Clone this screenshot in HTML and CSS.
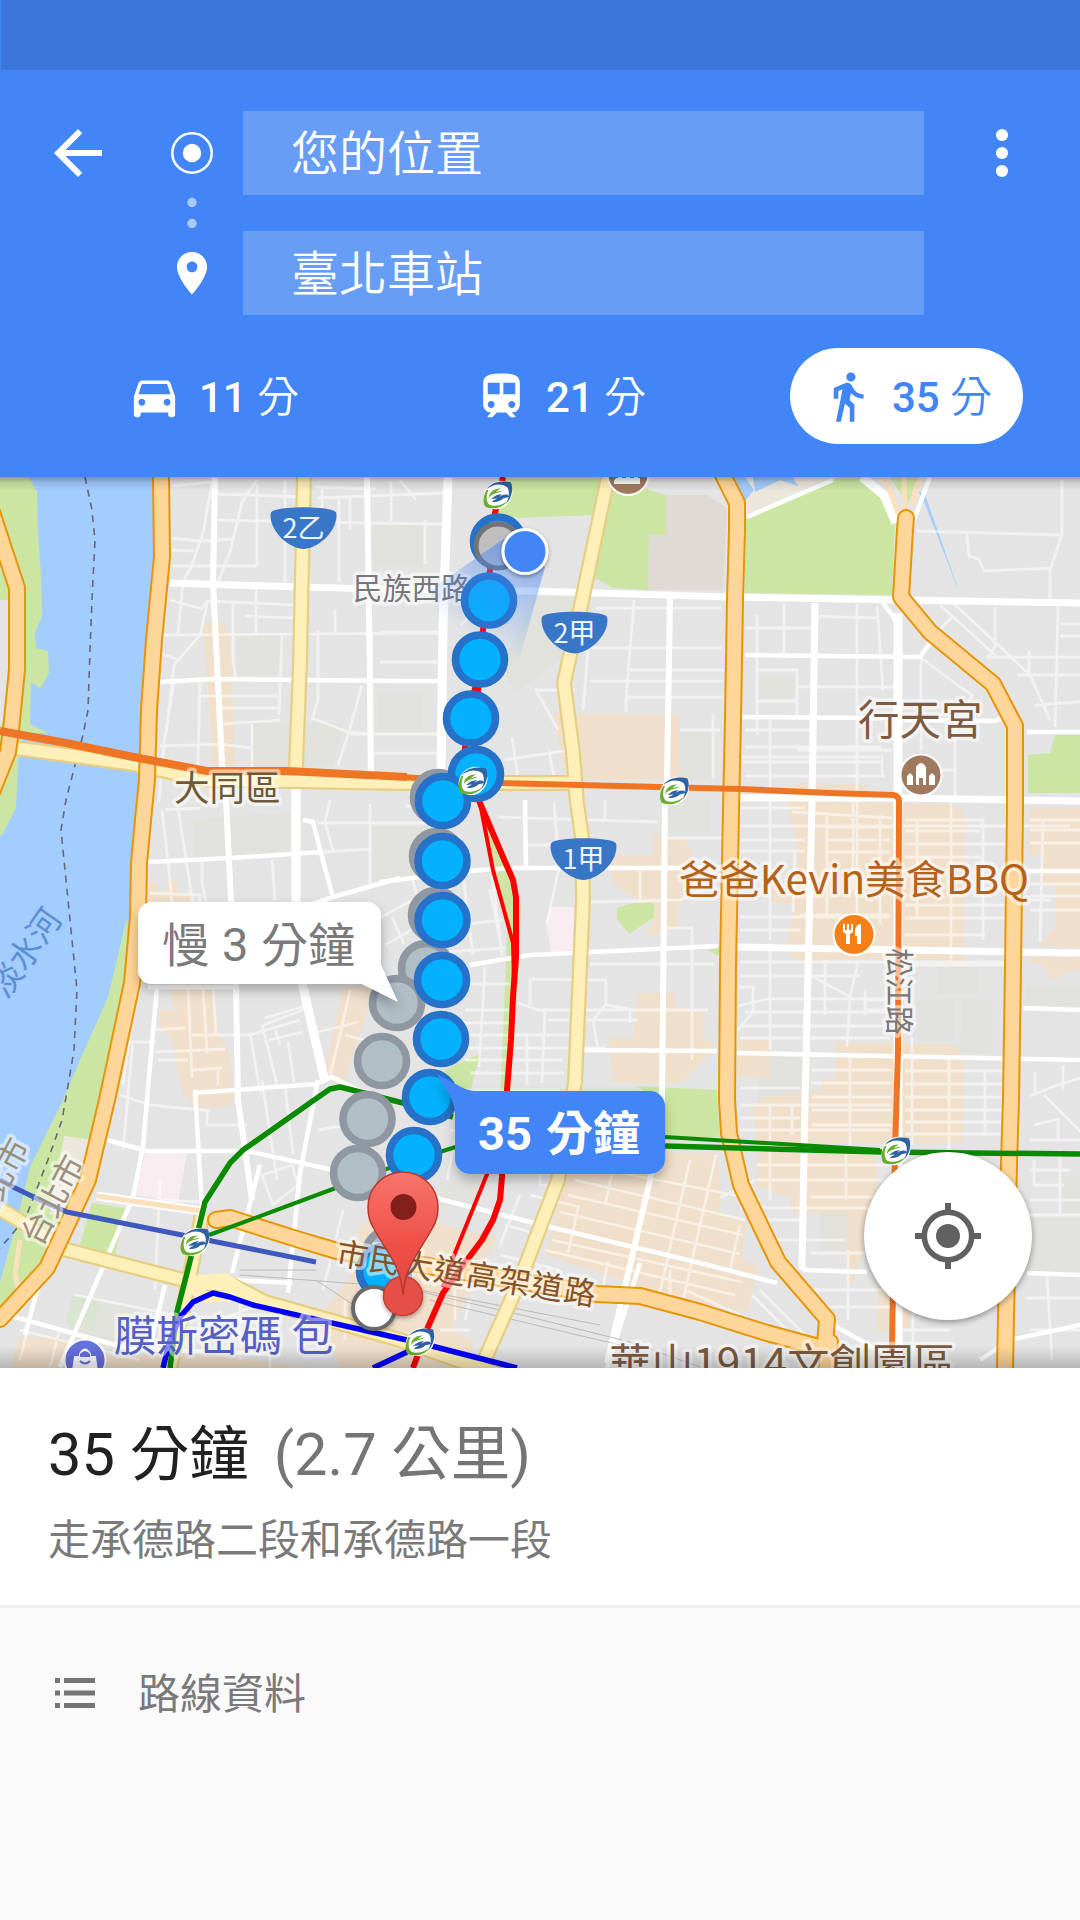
FILE: index.html
```html
<!DOCTYPE html>
<html lang="zh-Hant">
<head>
<meta charset="utf-8">
<title>路線規劃</title>
<link rel="stylesheet" href="styles.css">
</head>
<body>
<header class="header">
  <div class="status-bar"></div>
  <div class="search">
    <svg class="back" viewBox="0 0 24 24"><path d="M20 11H7.83l5.59-5.59L12 4l-8 8 8 8 1.41-1.41L7.83 13H20v-2z"/></svg>
    <svg class="markers" viewBox="0 0 70 204">
      <circle cx="35" cy="42" r="19.700" class="ring"/>
      <circle cx="35" cy="42" r="9.200"/>
      <circle cx="35" cy="91.500" r="4.700" class="dim"/>
      <circle cx="35" cy="112.500" r="4.700" class="dim"/>
      <path transform="translate(9.200 136.800) scale(2.150 2.120)" d="M12 2C8.130 2 5 5.130 5 9c0 5.250 7 13 7 13s7-7.750 7-13c0-3.870-3.130-7-7-7zm0 9.500c-1.380 0-2.500-1.120-2.500-2.500s1.120-2.500 2.500-2.500 2.500 1.120 2.500 2.500-1.120 2.500-2.500 2.500z"/>
    </svg>
    <div class="field origin"><span>您的位置</span></div>
    <div class="field destination"><span>臺北車站</span></div>
    <svg class="more" viewBox="0 0 16 60"><circle cx="8" cy="12" r="6.100"/><circle cx="8" cy="30" r="6.100"/><circle cx="8" cy="48" r="6.100"/></svg>
  </div>
  <nav class="modes">
    <div class="mode">
      <svg viewBox="0 0 24 24"><path d="M18.920 6.010C18.720 5.420 18.160 5 17.500 5h-11c-.66 0-1.210.42-1.420 1.010L3 12v8c0 .55.45 1 1 1h1c.55 0 1-.45 1-1v-1h12v1c0 .55.45 1 1 1h1c.55 0 1-.45 1-1v-8l-2.080-5.990zM6.500 16c-.83 0-1.500-.67-1.500-1.500S5.670 13 6.500 13s1.500.67 1.500 1.500S7.330 16 6.500 16zm11 0c-.83 0-1.500-.67-1.500-1.500s.67-1.500 1.500-1.500 1.500.67 1.500 1.500-.67 1.500-1.500 1.500zM5 11l1.500-4.500h11L19 11H5z"/></svg>
      <span class="time"><b>11</b> 分</span>
    </div>
    <div class="mode">
      <svg viewBox="0 0 24 24"><path d="M12 2c-4 0-8 .5-8 4v9.500C4 17.430 5.570 19 7.500 19L6 20.500v.5h2l2-2h4l2 2h2v-.5L16.500 19c1.930 0 3.500-1.570 3.500-3.500V6c0-3.500-3.580-4-8-4zM7.500 17c-.83 0-1.500-.67-1.500-1.500S6.670 14 7.500 14s1.500.67 1.500 1.500S8.330 17 7.500 17zm3.700-6H6V6h5.200v5zm1.600 0V6H18v5h-5.200zm3.700 6c-.83 0-1.500-.67-1.500-1.500s.67-1.500 1.500-1.500 1.500.67 1.500 1.500-.67 1.500-1.500 1.500z"/></svg>
      <span class="time"><b>21</b> 分</span>
    </div>
    <div class="mode selected">
      <svg viewBox="0 0 24 24"><path d="M13.500 5.500c1.100 0 2-.9 2-2s-.9-2-2-2-2 .9-2 2 .9 2 2 2zM9.800 8.900L7 23h2.100l1.800-8 2.100 2v6h2v-7.500l-2.100-2 .6-3C14.800 12 16.800 13 19 13v-2c-1.900 0-3.500-1-4.300-2.400l-1-1.600c-.4-.6-1-1-1.700-1-.3 0-.5.1-.8.1L6 8.300V13h2V9.600l1.800-.7"/></svg>
      <span class="time"><b>35</b> 分</span>
    </div>
  </nav>
</header>

<main class="map">
<svg class="canvas" viewBox="0 477 1080 891">
  <defs>
    <linearGradient id="beam" gradientUnits="userSpaceOnUse" x1="525" y1="552" x2="475" y2="640">
      <stop offset="0" stop-color="#4285f4" stop-opacity=".55"/><stop offset="1" stop-color="#4285f4" stop-opacity="0"/>
    </linearGradient>
    <linearGradient id="pin" x1="0" y1="0" x2="0" y2="1"><stop offset="0" stop-color="#f7756b"/><stop offset=".6" stop-color="#ee4f47"/><stop offset="1" stop-color="#dd4a40"/></linearGradient>
    <linearGradient id="topShade" x1="0" y1="0" x2="0" y2="1"><stop offset="0" stop-opacity=".3"/><stop offset=".4" stop-opacity=".1"/><stop offset="1" stop-opacity="0"/></linearGradient>
    <linearGradient id="bottomShade" x1="0" y1="0" x2="0" y2="1"><stop offset="0" stop-opacity="0"/><stop offset="1" stop-opacity=".2"/></linearGradient>
    <filter id="shadow" x="-20%" y="-40%" width="140%" height="200%"><feDropShadow dx="0" dy="6" stdDeviation="6" flood-opacity=".28"/></filter>
    <filter id="soft" x="-30%" y="-30%" width="160%" height="160%"><feDropShadow dx="0" dy="2" stdDeviation="2" flood-opacity=".35"/></filter>
    <g id="station">
      <ellipse rx="15.500" ry="13" fill="#fff" transform="rotate(-42)"/>
      <path d="M-11 -6C-7 -13 5 -15 13 -12.500C15.500 -6 14 3 8 8.500C11 3 12 -4 9 -8C3 -12 -5 -11 -11 -6Z" fill="#2f62a3"/>
      <path d="M-11.500 -5C-15 1 -15.500 8 -12.500 12C-5 15 5 13 9.500 6C4 10.500 -4 12 -9 9.500C-12 6 -12 0 -9.500 -5Z" fill="#6aad2f"/>
      <path d="M-9 3C-9 -4 -2 -7 3 -6.500C0 -5 -1 -4 -2 -3L5 -4.500C1 -1 -5 -3 -9 3Z" fill="#6aad2f"/>
      <path d="M-6 7C-1 7.500 3 6 5 3.500L11 2L10 0C6 -1 4 0 1 2L4 -1L-1 0C-4 1 -5 3 -7 4L-1 3.500C-3 5 -5 5 -6 7Z" fill="#2f62a3"/>
    </g>
    <path id="shield" d="M-31 -17C-20 -22 20 -22 31 -17Q33 -16 33 -13C33 6 12 21 0 21C-12 21 -33 6 -33 -13Q-33 -16 -31 -17Z" fill="#3876c8"/>
  </defs>

  <rect y="477" width="1080" height="891" fill="#e4e4e4"/>
  <g class="institution">
    <path d="M237 635h45v40h-45zM372 525h51v42h-51zM253 723h90l-10 44h-80zM377 695h46v38h-46zM193 820l97-8v43l-97 4zM372 827h72v48l-72 6zM535 597h40l-10 60-48 34-18-20zM680 733h35v46h-35zM758 676h36v22h-36zM937 967h42v27h-42zM917 1000h36v42h-36zM962 1000h30v53h-32zM758 1057h44v46h-44zM1025 985h55v20h-55zM1032 1218h48v54h-54zM820 1213h30v37h-30zM1062 1176h18v38h-18zM440 1060h30v40h-30zM660 800h50v32h-45zM440 1180h40v26h-40zM75 1298l60 10-8 50-60-20z"/>
  </g>
  <g class="commercial">
    <path d="M202 623l20-1 8 15 5 128h-22l-6-88zM148 883h10v10h10v-12h9v12h14v12h-43zM170 988h43l5 45 12 22 4 45-15 8h-19l-17-13-13-60-10-5v-20h14zM343 987h27l60-20-60 35-27 83-20-6zM553 713l127 2v65H567zM610 855h43v-22l34 7 10 33-20 34v20l-30 10 8-28-42-24zM638 993h37v13l28 6v24l12 11-33 36h-69l-5-45h25zM787 800l110 3 53 1 12 5 6 19h-4v135l-64-5-105 4-8-17 8-40-24-3v-18h26v-40l-8-30zM797 782l70 3v12h-80zM1030 807h50v141l-40-3 16-20v-40h-14v-30h-14zM1028 957h52v12l-27 10-12-15-13-2zM737 1040h33v38h-33zM835 1042l122 3 6 15v83H757l-5-38 15-8 55-7v-10h13zM757 1150h120v65l-25 68-5 4v-74h-57v-16l-33-10zM850 1283h60v44l-33 5v-48zM565 1177l25-24h127l5 45-4 14 29 10-5 38 16 6-10 46-68-12-135-45zM410 1217l87 20-27 53-20 40 23 10-3 28H340l-20-53 35-45 5-45zM20 1337h37l60 20 70-5 130 16H10zM180 1080h52v25l-40 3z"/>
  </g>
  <path class="medical" d="M145 1153h42l-9 49-43-7zM550 907h24l-1 43-22 2-5-29z"/>
  <path fill="#dfdad3" d="M666 495h41l20 13-4 82h-75l1-55h17z"/>
  <path fill="#ebe7dc" d="M744 477h90l-88 38z"/>
  <path class="park" d="M502 477h98l-8 38-74 3-23-5zM615 480l51 15v40h-17l-1 55-35-2-20-11zM746 518l94-41h23l20 16 12 30-3 72-147-2zM890 477h33l-16 27zM1055 735h25v58h-52v-38l22-2zM617 908l16-5h21v14l-25 17-12-15zM445 1070l35-16-13 50h-22zM635 1086l82 4 3 47-60 1-2-40zM708 950l13-3v10zM480 803l33 74 8 28-2 55-9 140-10 0 8-180z"/>
  <path class="water" d="M735 477h10l9 13-10 12zM753 477h40l5 9-18-6-25 12zM918 491l7 4 33 93-2-4-33-85z"/>
  <path class="water" d="M0 477h161v103l-14 130v120l-15 80-10 80-15 120-60 160-47 30z"/>
  <path d="M0 570l12 40-2 100-10 20z" fill="#e4e4e4"/>
  <path class="park" d="M0 477h29l8 15 1 38 3 45 1 41-7 17 1 15 12 3 1 22-9 16-9-7-1 42 18 9-25 0-5 30-2 45-14 27H0zM127 917l-19 80-28 63-17 40-33 67-12 50-18 65v25l50-45 45-80 15-80 20-120z"/>
  <path d="M0 600l12 0-6 120-6 6z" fill="#e4e4e4"/>
  <path d="M64 1136l30 4-15 70-30 5z" fill="#ebe7dc"/>
  <path class="park" d="M92 1203l33 5-10 47-35-10z"/>
  <path d="M72 1296l28 5-7 29-28-6z" fill="#d9e5d2"/>

  <g class="minor">
    <path d="M172 486l40-4M215 494l90 3M315 487l60 2M317 498l130-5M217 520l150 3 78 1M170 538l30 3 34-2M172 550l22 1M172 566h84M245 616l50 2M170 600l32 9 5-8 90 4M160 635l282-2M162 654l15 5M200 696h78M222 708h56M222 724l58-4M160 746l60-2 32 4M312 718l36 14 20 2M348 734h95M370 753h72M213 477l-10 56-12 34-9 16M257 480l-15 22-12 50-12 30M257 484v82M285 480v103M322 487v43M339 498v84M350 498v32M183 583l-5 50M233 602v58l3 18M318 630v70l-6 20M256 583v50M282 635l-3 80M335 610v24M208 600l-8 35-26 30-8 70M200 682l-3 120M174 682l-10 60-5 60M252 724v50M362 685l-14 50-10 30M391 481v40M400 480l16 20M425 520v44M500 595l-40 30M380 632h60M380 662h60M165 810l35-2M162 810l6 52 4 40M178 808l8 50 8 54M330 800l-5 22 8 28M370 804v80M272 860l3 40M202 862v20l4 20M150 893l50 2v10M318 823h120M322 852l50-3"/>
    <path d="M596 608h125M634 600l-8 100M592 648h130M630 670h94M590 681h133M626 697h97M588 650l-5 60M626 700v12M535 690h40M536 690l22 40M680 730h40M713 715v64M512 738l8 52M505 760l65-10M549 750l6 33M405 806l40 2M498 817l160 5M554 803l5 65-12 55M528 845h28M605 800v20M640 868v34M590 902l90-2 25-12M692 930v130M665 928h28M665 838h60M590 964h125M588 980h18v24l-13 16 5 30M530 979l70 1M530 979v26M518 1003l20 7h170M545 1008l-3 75M548 1020h90M605 1005l25 4v14M470 984h40M465 1010h45M460 1023h50M465 1035h105M465 1048h140M465 1060h98M470 1073h94M465 1090h95M485 967l-6 100M527 1035v50M500 890l-10 0 12 60M463 875l10 80M492 875l10 80M460 925l42-5M445 952l60-4M392 917l12 27M412 878l6 22M380 918l45-25M385 945l35-20"/>
    <path d="M757 615v120M784 604v50M816 616l60 2M745 628h66M877 606l6 84M857 604v316M757 670h40v48M798 687h96M757 701h40M745 730h70M745 747h136M740 757h140M742 762h140M745 776h140M882 755v22M770 720v220M797 750h95M900 640v40M920 657l40 30 12 8-5 12M921 660v90M895 770h60M955 715v82M917 531l143 4M967 533l2 23 10 3 5 12 66-3M1062 480v55l-12 35v30M940 605l55 50M952 617l-15 15M950 600l80 75 20 45M995 607v40l-7 10h92M1029 650v25M1017 675h63M1058 607l-3 120M1060 624h20M1060 636h20M1035 705l45-3M1030 900h20M740 808h65M740 826h330M792 812l100 6M740 840h65M740 851h65M795 852l-2 60M827 812v105M853 800v90M880 815v110M825 827h65M825 840h65M825 852h65M905 820h78v120M917 820v100M905 831h75M905 844h105M905 857h78M951 803v160M740 917h150M740 930h60M800 915h90M905 905h100M905 918h100M905 935h80M1030 820h50M1030 830h50M1030 843h50M1030 884h50M1030 896h50M1030 910h50M1043 820l-3 122M740 962h270M740 976h120M770 950v100M738 1006l30-7h120M738 1030l15-18v-25h-14M810 975l40 22 8-35M850 997l-3 50M745 1012h145M740 1026h150M740 1038h150M865 990v25M865 1000h28M865 1010h25M825 960v55M903 965h105M912 1037v20"/>
    <path d="M740 1088h60M740 1105h150M812 1070h80M812 1083h80M812 1097h80M812 1110h80M812 1125h80M740 1118h60M740 1130h150M770 1105v60M792 1105v30M850 1058v87M912 1058v87M949 1060v90M985 1072v62M905 1071h100M905 1084h100M905 1097h100M905 1110h100M905 1122h100M905 1134h100M1030 1096l25-10 25-8M1063 1065v25M1044 1095l40 40M1034 1125l24-6v22M1035 1072v20M770 1150v50M846 1150v50M757 1165h140M757 1180h150M810 1197h70M740 1208h130M760 1220h45M770 1240h75M810 1253h60M848 1250v70M810 1290h80M810 1307h80M1030 1140h50M1034 1160v25h30M1060 1150v65M1030 1170h40M1030 1200h50M1026 1215h54M1047 1275l5 85M1026 1298h54M1030 1330h50M913 1300v60M890 1330h60M760 1290l50 50M752 1295l45 45M685 1290l55 25M580 1165l180 35M575 1180l170 40M568 1195l175 40M560 1212l180 42M552 1240l190 42M545 1250l190 45M716 1155l-33 145M690 1160l-32 140M755 1180l-35 18M615 1160l-10 45M578 1208l-10 45M608 1262l-8 40M670 1270v30M740 1225l-10 45M520 1195l-20 50M530 1195l50 12M505 1225l28 8M445 1100l25 5M450 1130l30 5M447 1180l10-50M540 1170v15h15"/>
    <path d="M150 1030l35-2M158 1060h30M155 1052l70-3M188 988l4 90M203 988l4 65M213 988l3 45M190 1035h60l50-15M250 1032l10 60M262 1025l15 60M263 1025l40-15M265 1018l40-12M268 1040l35-8M275 1030l5 15M288 1042l6 40M218 1070v15M192 1070l30-2M133 1010l-10 75M130 1042h25M350 990l-10 45-10 40M318 1032l40-10M345 1035l40 10M120 1095l30 10 60 6M133 1040l-10 110M207 1110v15h40M262 1080l15 100M285 1085l8 70M262 1175l30-10 6 20-25 20zM318 1130l30-5M155 1200l50 2M160 1180l-5 110M75 1295l100 20M30 1320l-10 40M60 1327l-10 40M220 1320l50-20M240 1300v60M343 1210l-20 80M20 1330l120 30M455 1290v30M470 1300l-5 20M440 1330h30M500 1255l60 15M270 1330v38M345 1300v40"/>
  </g>
  <g class="major">
    <path class="w6" d="M170 583l130 4 80 2 150 2 200 6 170 3 180 3M815 603l-3 200-7 297-3 170M740 798h165l175 3M737 947l343 6"/>
    <path class="w5" d="M215 477l-2 106 9 180 4 37 5 100 5 87 2 113 14 100M367 477l3 200 1 110M670 597l-3 183-2 20-3 300-12 80-43 183"/>
    <path class="w9" d="M448 477l-5 150-2 148M296 770v130l7 87 22 95M898 613v750M862 477l22 18 12 28"/>
    <path class="w4" d="M160 682l53-3 187 2h45M745 655l175 2 10-14M742 717l150 1M905 720l90 1 12-5M1027 732h53M737 1053l343 7M1025 871h55M1023 1008l57 2M380 882l90-11 43-3h207M470 965l60-10 188-9M583 1050l134 1M148 862l82-4 90-6M303 820l10 2 9 35 11 40 67-19M230 905h80l23-8M148 987h90M193 1093l124-9 15-7 30 15M195 1090l7 117M157 987l-10 113-4 47-10 50-73 170M107 1140l40 11h100l86 19 110 30 107 27 150 36 77 20M318 1080l-18 93-12 120M260 1165l-28 108M803 1270l64 2M1027 1273l53 2M0 1313l130 36 150 5M165 1285l-15 60M747 517l86-37M912 525l18-48M833 1325l75 42M980 1360l30-20 70-15M883 603l15 20v70M640 1263l-33 105M735 1148l150 5M525 800l1 68M232 1280l60 3M55 1225l-30 110"/>
  </g>

  <path class="rail" d="M230 1163l-35 60M240 1270h76M240 1275l160 12 130 30 100 25 70 25M316 1280l60 40M420 1290l180 35M430 1300l190 45"/>
  <path class="ferry" d="M85 477l7 33 3 30-3 60-2 50-2 60-5 25-8 30-9 35-5 30 4 40 5 50 7 70-3 60-5 30-7 40-13 37-23 60-17 21-12 13"/>

  <g class="arterial-case"><path d="M15 748l118 16 72 16 85 1 110 2h175M304 477l-4 186-4 104M608 477l-28 133-16 73 9 70 4 50 5 34 1 63-8 183-5 25-12 72-38 100-40 90M0 1209l25 15 42 26 93 24 40 10 32 1 33 17 135 38 80 28 60 17M202 1215l-15 75-17 78"/></g>
  <g class="arterial"><path d="M15 748l118 16 72 16 85 1 110 2h175M304 477l-4 186-4 104M608 477l-28 133-16 73 9 70 4 50 5 34 1 63-8 183-5 25-12 72-38 100-40 90M0 1209l25 15 42 26 93 24 40 10 32 1 33 17 135 38 80 28 60 17M202 1215l-15 75-17 78"/><path d="M185 1282l40-3 25 16-45 2z"/></g>
  <path d="M97 1196l105 15" stroke="#fff" stroke-width="9" fill="none"/><path d="M97 1196l105 15M905 513l-1-36M898 513l-11-30-8-8M912 505l4-18 6-10M20 1240l-5 35 5 20" stroke="#fbe0bc" stroke-width="5" fill="none"/>
  <g class="highway-case"><path id="hw" d="M161 477l1 80-8 83-5 70-2 70-3 30-5 53-1 54-6 66-25 117-19 80-41 88-47 51M-8 512l25 76v82l-6 60-3 22-16 40M719 467l18 36v27l-2 70-2 120-2 90-3 157-1 133 2 33 12 52 37 77 49 57-2 25M906 518l-1 12-4 67 29 35 63 52 22 42v84l-2 157-2 133-2 63-4 205M216 1220l14-2 70 22 37 11 260 43 43 2 60 16 67 21 48 13M830 1342l-4 30"/></g>
  <g class="highway"><use href="#hw"/></g>

  <g class="transit">
    <path class="brown-line" d="M0 732l66 11 67 13 74 15h80l113 6 103 6 237 6 90 4 63 2q6 1 6 6l-1 250-3 100-3 200"/>
    <path stroke="#ef7524" stroke-width="8" d="M0 731l66 12 67 14 74 14h80l120 6"/>
    <path stroke="#0a8a00" stroke-width="5.500" d="M170 1368l7-56 14-55 9-34 5-21 25-39 13-13 74-52 13-9 10-2 20 5 43 11 50 14M665 1146l215 6 200 2"/>
    <path stroke="#0a8a00" stroke-width="4" d="M209 1235l124-46 47-18 63-20 22-7M665 1137l215 13"/>
    <path stroke="#3f58be" stroke-width="5" d="M0 1180l13 7 27 13 27 12 120 24 129 26"/>
    <path stroke="#0202fa" stroke-width="5.500" d="M163 1368l7-28 10-23 13-15 20-9 17 4 23 8 167 38 97 25M373 1368l34-16"/>
    <path stroke="#f00" stroke-width="6" d="M503 477l-8 36-5 57-7 60-8 58-10 60 15 55 23 54 10 23 3 17v60l-3 40-2 43-4 50-5 87-2 23-7 20-11 20-15 20-24 33-15 34-15 41"/>
    <path stroke="#f00" stroke-width="4" d="M480 803l13 67 20 73 1 40M503 1135l-48 118-12 34M483 630l-6 90"/>
  </g>

  <g class="halo">
    <text x="174" y="801" font-size="35.500" fill="#6e5a38">大同區</text>
    <text x="353" y="599" font-size="29.300" fill="#777">民族西路</text>
    <text x="858" y="735" font-size="41.500" fill="#7d5a40">行天宮</text>
    <text x="679" y="894" font-size="40" fill="#b5621a" textLength="350" lengthAdjust="spacingAndGlyphs">爸爸Kevin美食BBQ</text>
    <text transform="translate(888 948) rotate(90)" font-size="29" fill="#777">松江路</text>
    <text transform="translate(19 1250) rotate(-62)" x="12" y="18" font-size="32" fill="#9c8f7c">台北市</text>
    <text transform="translate(-36 1233) rotate(-62)" x="12" y="18" font-size="32" fill="#9c8f7c">新北市</text>
    <text x="114" y="1351" font-size="42" fill="#5560c6">膜斯密碼 包</text>
    <text x="609" y="1379" font-size="42" fill="#7d5a40" textLength="347" lengthAdjust="spacingAndGlyphs">華山1914文創園區</text>
  </g>
  <text transform="translate(10 988) rotate(-55)" x="-12" y="4" font-size="33" fill="#5b8fd2" class="label">淡水河</text>

  <g class="alternate">
    <circle cx="438" cy="797" r="24.500"/><circle cx="437" cy="856" r="24.500"/><circle cx="436" cy="915" r="24.500"/><circle cx="426" cy="968" r="24.500"/><circle cx="397" cy="1003" r="24.500"/><circle cx="382" cy="1061" r="24.500"/><circle cx="367.500" cy="1119" r="24.500"/><circle cx="358" cy="1173" r="24.500"/><circle cx="390" cy="1254" r="24.500"/>
  </g>
  <g class="route">
    <circle cx="498" cy="541.500" r="24.500"/><circle cx="489" cy="600.500" r="24.500"/><circle cx="480" cy="659.500" r="24.500"/><circle cx="471" cy="718.500" r="24.500"/><circle cx="476" cy="774" r="24.500"/><circle cx="443" cy="801" r="24.500"/><circle cx="442.500" cy="861" r="24.500"/><circle cx="442.500" cy="920" r="24.500"/><circle cx="442" cy="980" r="24.500"/><circle cx="441" cy="1039" r="24.500"/><circle cx="430" cy="1097" r="24.500"/><circle cx="414" cy="1155" r="24.500"/><circle cx="384" cy="1271" r="24.500"/>
  </g>
  <g class="halo"><text transform="translate(335 1264) rotate(9.200)" font-size="31.500" fill="#83542b" textLength="262">市民大道高架道路</text></g>
  <circle cx="498" cy="546" r="22" fill="#bebebe" stroke="#737373" stroke-width="5"/>
  <path d="M508 536L430 590L445 640L517 668L545 567Z" fill="url(#beam)"/>
  <circle cx="525" cy="551.500" r="22" fill="#4285f6" stroke="#fff" stroke-width="3" filter="url(#soft)"/>

  <use href="#station" x="498" y="495"/><use href="#station" x="473" y="781"/><use href="#station" x="674.500" y="791"/><use href="#station" x="195" y="1242"/><use href="#station" x="420" y="1342"/><use href="#station" x="896" y="1151"/>

  <g class="shield">
    <use href="#shield" x="303.500" y="528"/><text x="303.500" y="538">2乙</text>
    <use href="#shield" x="574.500" y="632.500"/><text x="574.500" y="643">2甲</text>
    <use href="#shield" x="583.500" y="859"/><text x="583.500" y="869">1甲</text>
  </g>
  <g class="poi">
    <circle cx="628" cy="474.500" r="20.500" fill="#a07a5e"/><path d="M616 478h24v6h-26v-3zM618 470h4v8h-4zM626 470h4v8h-4zM634 470h4v8h-4z" fill="#fff"/>
    <circle cx="921" cy="775" r="20.500" fill="#a07a5e"/><path d="M907 785v-9l3-3 3 3v9zM916 785v-18q5-8 10 0v18h-3v-7h-4v7zM929 785v-9l3-3 3 3v9z" fill="#fff"/>
    <circle cx="854" cy="934.500" r="20.500" fill="#f58018"/><path d="M843 924h2v6h2v-6h2v6h2v-6h2v8l-3 2v10h-4v-10l-3-2zM855 930q1-6 6-6v20h-4v-8h-2z" fill="#fff"/>
    <circle cx="85" cy="1360" r="20.500" fill="#6571dd"/><path d="M75 1357h20l2 14H73zM80 1358v-4q5-9 10 0v4" fill="#fff" stroke="#fff" stroke-width="2"/><path d="M80 1354q5-6 10 0v3H80z" fill="#6571dd"/><path d="M80 1361q5 5 10 0" fill="none" stroke="#6571dd" stroke-width="2"/>
  </g>

  <circle cx="374" cy="1308" r="21" fill="#fff" stroke="#6b6b6b" stroke-width="4" filter="url(#soft)"/>
  <circle cx="403" cy="1296" r="19.500" fill="#e65046" stroke="#c83c34" stroke-width="1.500" filter="url(#soft)"/>
  <path d="M403 1295C401 1265 385 1250 373 1227C368 1219 368 1212 368 1207a35 35 0 0 1 70 0C438 1212 438 1219 433 1227C421 1250 405 1265 403 1295Z" fill="url(#pin)" stroke="#b83831" stroke-width="1.500"/>
  <circle cx="403.500" cy="1207" r="13" fill="#821f1a"/>

  <g filter="url(#shadow)"><path d="M152 902h215a14 14 0 0 1 14 14v49l17 37-36-18H152a14 14 0 0 1-14-14v-54a14 14 0 0 1 14-14z" fill="#fff"/></g>
  <text class="bubble" x="162" y="962" fill="#7a7a7a">慢</text><text class="bubble" x="222" y="960.500" fill="#7a7a7a">3</text><text class="bubble" x="261" y="962" fill="#7a7a7a">分鐘</text>
  <g filter="url(#shadow)"><path d="M437 1074l24 13q8 4 14 4h175a15 15 0 0 1 15 15v53a15 15 0 0 1-15 15H470a15 15 0 0 1-15-15v-45q0-8-4-16z" fill="#4285f6"/></g>
  <text class="bubble active" x="478" y="1150" fill="#fff" textLength="54">35</text><text class="bubble active" x="546" y="1150" fill="#fff">分鐘</text>

  <rect y="477" width="1080" height="14" fill="url(#topShade)"/>
  <rect y="1346" width="1080" height="22" fill="url(#bottomShade)"/>
</svg>
<div class="locate">
  <svg viewBox="0 0 66 66"><circle cx="33" cy="33" r="23.700" fill="none" stroke="#616161" stroke-width="5.600"/><circle cx="33" cy="33" r="12"/><path d="M30 0h6v9h-6zM30 57h6v9h-6zM0 30h9v6H0zM57 30h9v6h-9z"/></svg>
</div>
</main>

<section class="summary">
  <h1><span class="duration">35 分鐘</span><span class="distance">(2.7 公里)</span></h1>
  <p>走承德路二段和承德路一段</p>
</section>
<section class="details">
  <svg viewBox="0 0 40 30"><path d="M0 0h5v5H0zM9 0h31v5H9zM0 12.500h5v5H0zM9 12.500h31v5H9zM0 25h5v5H0zM9 25h31v5H9z"/></svg>
  <span>路線資料</span>
</section>
</body>
</html>
```
FILE: styles.css
```css
* { box-sizing: border-box; }
body {
  margin: 0;
  width: 1080px;
  height: 1920px;
  overflow: hidden;
  display: flex;
  flex-direction: column;
  background: #fafafa;
  font-family: Roboto, "Noto Sans CJK TC", sans-serif;
}
.header { height: 477px; flex: none; background: #4285f6; color: #fff; fill: #fff; }
.status-bar { height: 70px; background: #3b76da; border-left: 1px solid #4285f6; }
.search {
  display: grid;
  grid-template-columns: 156px 71px 16px 681px 156px;
  grid-template-rows: 84px 84px;
  row-gap: 36px;
  padding-top: 41px;
}
.back { grid-area: 1 / 1; place-self: center; width: 72px; height: 72px; }
.markers { grid-area: 1 / 2 / 3 / 3; justify-self: end; width: 70px; height: 204px; }
.ring { fill: none; stroke: #fff; stroke-width: 2.5; }
.dim { fill: #adc9fb; }
.field { grid-column: 4; height: 84px; background: #689df6; padding-left: 48px; font-size: 48px; font-weight: 350; line-height: 88px; }
.origin { grid-row: 1; }
.destination { grid-row: 2; }
.more { grid-area: 1 / 5; place-self: center; width: 16px; height: 60px; }
.modes { display: grid; grid-template-columns: 347px 316px 233px; padding-left: 127px; margin-top: 33px; height: 96px; }
.mode { display: flex; align-items: center; }
.mode svg { width: 55px; height: 55px; }
.time { margin-left: 17px; padding-top: 4px; font-size: 42px; font-weight: 350; line-height: 60px; white-space: nowrap; }
.time b { font-weight: 500; }
.selected { background: #fff; border-radius: 48px; padding-left: 30px; color: #4285f6; fill: #4285f6; }

.map { position: relative; height: 891px; flex: none; overflow: hidden; }
.canvas { display: block; width: 1080px; height: 891px; }
.institution { fill: #e0e2db; }
.commercial { fill: #f0dfca; }
.medical { fill: #f8ecf0; }
.park { fill: #cbe6a3; }
.water { fill: #a3ccff; }
.minor, .major, .arterial, .arterial-case, .highway, .highway-case, .transit { fill: none; stroke-linejoin: round; }
.minor { stroke: #fff; stroke-opacity: .5; stroke-width: 2.8; }
.major { stroke: #fff; }
.w4 { stroke-width: 4.5; }
.w5 { stroke-width: 6; }
.w6 { stroke-width: 7; }
.w9 { stroke-width: 9; }
.rail { fill: none; stroke: #bbb; stroke-width: 1; }
.ferry { fill: none; stroke: #667; stroke-width: 1.6; stroke-dasharray: 7 6; }
.arterial { stroke: #ffefb8; stroke-width: 11.5; }
.arterial-case { stroke: #e6cf85; stroke-width: 16; }
.highway { stroke-linecap: round; }
.highway-case { stroke: #e69506; stroke-width: 18; stroke-linecap: round; }
.highway use { stroke: #ffd699; }
.highway { stroke-width: 14; }
.brown-line { stroke: #ef7524; stroke-width: 6; }
.halo text { font-family: "Noto Sans CJK TC", sans-serif; paint-order: stroke; stroke: rgba(255, 255, 255, .55); stroke-width: 7px; stroke-linejoin: round; }
.label { font-family: "Noto Sans CJK TC", sans-serif; }
.alternate circle { fill: #b0bec5; stroke: #8f97a3; stroke-width: 7.6; }
.route circle { fill: #03b1ff; stroke: #2672c8; stroke-width: 7.6; }
.shield text { fill: #eef4ff; font-size: 27px; text-anchor: middle; font-family: "Noto Sans CJK TC", sans-serif; }
.poi circle { stroke: #fff; stroke-width: 2; }
.bubble { font-size: 47px; }
.active { font-size: 47px; font-weight: 700; }
.locate {
  position: absolute;
  left: 864px;
  top: 675px;
  width: 168px;
  height: 168px;
  border-radius: 50%;
  background: #fff;
  box-shadow: 0 2px 6px rgba(0, 0, 0, .4);
  display: grid;
  place-items: center;
}
.locate svg { width: 66px; height: 66px; fill: #616161; }

.summary { height: 240px; flex: none; padding: 51px 0 0 48px; background: #fff; border-bottom: 3px solid #eee; }
h1 { margin: 0; font-size: 59.5px; font-weight: 400; line-height: 72px; white-space: nowrap; }
.duration { color: #212121; }
.distance { color: #757575; margin-left: 25px; }
.summary p { margin: 25px 0 0; font-size: 42px; line-height: 50px; color: #7a7a7a; }
.details { display: flex; align-items: center; height: 169px; flex: none; padding-left: 55px; color: #7a7a7a; fill: #757575; }
.details svg { width: 40px; height: 30px; }
.details span { margin-left: 43px; padding-top: 4px; font-size: 42px; line-height: 76px; }
```
